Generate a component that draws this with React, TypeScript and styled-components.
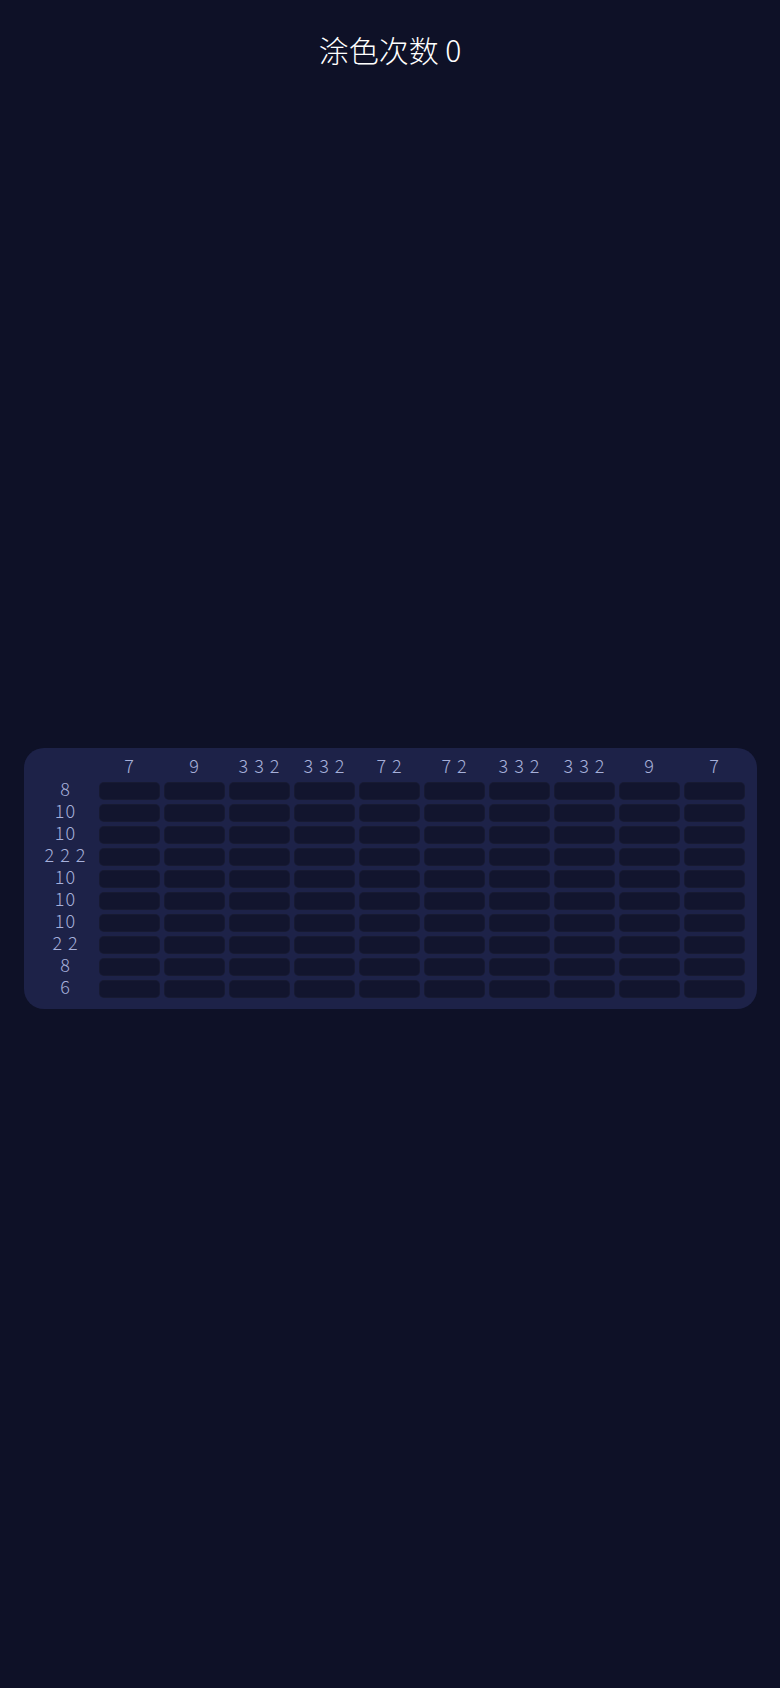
import React from "react";
import styled, { createGlobalStyle } from "styled-components";

const GlobalStyle = createGlobalStyle`
    html, body {
        margin: 0;
        padding: 0;
        background: #0e1127;
    }
    * {
        box-sizing: border-box;
    }
`;

const Page = styled.div`
    min-height: 100vh;
    display: flex;
    flex-direction: column;
    background: #0e1127;
    font-family: "Noto Sans CJK SC", "DejaVu Sans", sans-serif;
`;

const Title = styled.h1`
    margin: 0;
    padding-top: 29px;
    font-size: 30px;
    font-weight: 300;
    line-height: 40px;
    text-align: center;
    color: #ffffff;
`;

const Stage = styled.main`
    flex: 1;
    display: flex;
    align-items: center;
    justify-content: center;
    padding: 0 23px 0 24px;
`;

const Board = styled.div`
    width: 100%;
    display: grid;
    grid-template-columns: 59px repeat(10, 1fr);
    grid-template-rows: 20px repeat(10, 18px);
    gap: 4px;
    padding: 10px 12px 11px 12px;
    background: #1d2248;
    border-radius: 20px;
`;

const Clue = styled.div`
    display: flex;
    align-items: center;
    justify-content: center;
    padding-bottom: 5px;
    font-size: 18px;
    line-height: 13px;
    letter-spacing: 1px;
    font-weight: 300;
    color: #a6b0da;
    white-space: pre;
`;

const Cell = styled.div`
    background: #12152e;
    border: 1px solid rgba(255, 255, 255, 0.025);
    border-radius: 5px;
`;

const colClues = ["7", "9", "3 3 2", "3 3 2", "7 2", "7 2", "3 3 2", "3 3 2", "9", "7"];
const rowClues = ["8", "10", "10", "2 2 2", "10", "10", "10", "2 2", "8", "6"];

export default function App() {
    return (
        <Page>
            <GlobalStyle />
            <Title>涂色次数 0</Title>
            <Stage>
                <Board>
                    <div />
                    {colClues.map((c, i) => (
                        <Clue key={"c" + i}>{c}</Clue>
                    ))}
                    {rowClues.map((r, ri) => (
                        <React.Fragment key={"r" + ri}>
                            <Clue>{r}</Clue>
                            {colClues.map((_, ci) => (
                                <Cell key={ci} />
                            ))}
                        </React.Fragment>
                    ))}
                </Board>
            </Stage>
        </Page>
    );
}
